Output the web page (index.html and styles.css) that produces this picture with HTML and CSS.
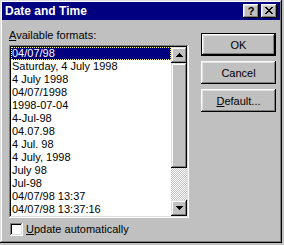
FILE: index.html
```html
<!DOCTYPE html>
<html lang="en">
<head>
    <meta charset="UTF-8">
    <title>Date and Time</title>
    <link rel="stylesheet" href="styles.css">
</head>
<body>
    <div class="window">
        <div class="title-bar">
            <span class="title">Date and Time</span>
            <div class="title-buttons">
                <button class="title-btn help">?</button>
                <button class="title-btn close">
                    <svg width="8" height="7" viewBox="0 0 8 7" shape-rendering="crispEdges">
                        <path d="M0 0h2v1h-2z M6 0h2v1h-2z M1 1h2v1h-2z M5 1h2v1h-2z M2 2h4v1h-4z M3 3h2v1h-2z M2 4h4v1h-4z M1 5h2v1h-2z M5 5h2v1h-2z M0 6h2v1h-2z M6 6h2v1h-2z" fill="#000"/>
                    </svg>
                </button>
            </div>
        </div>

        <div class="content">
            <div class="left">
                <div class="label"><u>A</u>vailable formats:</div>
                <div class="listbox">
                    <ul class="items">
                        <li class="selected">04/07/98</li>
                        <li>Saturday, 4 July 1998</li>
                        <li>4 July 1998</li>
                        <li>04/07/1998</li>
                        <li>1998-07-04</li>
                        <li>4-Jul-98</li>
                        <li>04.07.98</li>
                        <li>4 Jul. 98</li>
                        <li>4 July, 1998</li>
                        <li>July 98</li>
                        <li>Jul-98</li>
                        <li>04/07/98 13:37</li>
                        <li>04/07/98 13:37:16</li>
                    </ul>
                    <div class="scrollbar">
                        <div class="arrow">
                            <svg width="7" height="4" viewBox="0 0 7 4" shape-rendering="crispEdges">
                                <path d="M3 0h1v1h-1z M2 1h3v1h-3z M1 2h5v1h-5z M0 3h7v1h-7z" fill="#000"/>
                            </svg>
                        </div>
                        <div class="thumb"></div>
                        <div class="track"></div>
                        <div class="arrow">
                            <svg width="7" height="4" viewBox="0 0 7 4" shape-rendering="crispEdges">
                                <path d="M0 0h7v1h-7z M1 1h5v1h-5z M2 2h3v1h-3z M3 3h1v1h-1z" fill="#000"/>
                            </svg>
                        </div>
                    </div>
                </div>
                <div class="check-row">
                    <span class="checkbox"></span>
                    <span><u>U</u>pdate automatically</span>
                </div>
            </div>

            <div class="buttons">
                <button class="btn default">OK</button>
                <button class="btn">Cancel</button>
                <button class="btn"><u>D</u>efault...</button>
            </div>
        </div>
    </div>
</body>
</html>
```

FILE: styles.css
```css
body {
    margin: 0;
    background: #c0c0c0;
    font-family: "Liberation Sans", Arial, sans-serif;
    font-size: 11px;
    color: #000;
}
.window {
    width: 282px;
    height: 243px;
    box-sizing: border-box;
    padding: 2px;
    background: #c0c0c0;
    box-shadow: inset -1px -1px #000, inset 1px 1px #dfdfdf,
                inset -2px -2px #808080, inset 2px 2px #fff;
    display: flex;
    flex-direction: column;
}
.title-bar {
    height: 18px;
    background: #000080;
    color: #fff;
    display: flex;
    align-items: center;
    justify-content: space-between;
    padding: 0 3px 0 3px;
}
.title {
    font-weight: bold;
    font-size: 12px;
    line-height: 18px;
}
.title-buttons {
    display: flex;
    gap: 2px;
}
.title-btn {
    width: 16px;
    height: 14px;
    padding: 0;
    border: none;
    background: #c0c0c0;
    box-shadow: inset -1px -1px #000, inset 1px 1px #fff,
                inset -2px -2px #808080, inset 2px 2px #dfdfdf;
    font-family: "Liberation Sans", Arial, sans-serif;
    font-weight: bold;
    font-size: 11px;
    line-height: 14px;
    color: #000;
}
.close {
    display: flex;
    justify-content: center;
    align-items: flex-start;
    padding-top: 3px;
}
.close svg {
    display: block;
}
.content {
    display: flex;
    gap: 12px;
    padding: 9px 0 0 7px;
}
.left {
    width: 180px;
}
.label {
    line-height: 13px;
    margin-bottom: 3px;
}
.listbox {
    display: flex;
    padding: 2px;
    background: #fff;
    box-shadow: inset -1px -1px #fff, inset 1px 1px #808080,
                inset -2px -2px #dfdfdf, inset 2px 2px #000;
}
.items {
    list-style: none;
    margin: 0;
    padding: 0;
    flex: 1;
}
.items li {
    height: 13px;
    line-height: 13px;
    padding-left: 1px;
    white-space: nowrap;
}
.items li.selected {
    background: #000080;
    color: #fff;
    outline: 1px dotted #ffff80;
    outline-offset: -1px;
}
.scrollbar {
    width: 16px;
    display: flex;
    flex-direction: column;
}
.arrow, .thumb {
    background: #c0c0c0;
    box-shadow: inset -1px -1px #000, inset 1px 1px #dfdfdf,
                inset -2px -2px #808080, inset 2px 2px #fff;
}
.arrow {
    height: 16px;
    display: flex;
    justify-content: center;
    align-items: center;
}
.arrow svg {
    display: block;
}
.thumb {
    height: 105px;
}
.track {
    height: 32px;
    background: repeating-conic-gradient(#fff 0 25%, #c0c0c0 0 50%) 0 0 / 2px 2px;
}
.check-row {
    display: flex;
    align-items: flex-start;
    gap: 3px;
    margin: 5px 0 0 1px;
    line-height: 13px;
}
.checkbox {
    width: 13px;
    height: 13px;
    background: #fff;
    box-shadow: inset -1px -1px #fff, inset 1px 1px #808080,
                inset -2px -2px #dfdfdf, inset 2px 2px #000;
}
.buttons {
    display: flex;
    flex-direction: column;
    gap: 5px;
    margin-top: 4px;
}
.btn {
    width: 75px;
    height: 23px;
    padding: 0;
    border: none;
    background: #c0c0c0;
    box-shadow: inset -1px -1px #000, inset 1px 1px #fff,
                inset -2px -2px #808080, inset 2px 2px #dfdfdf;
    font-family: "Liberation Sans", Arial, sans-serif;
    font-size: 11px;
    color: #000;
}
.btn.default {
    box-shadow: inset -2px -2px #000, inset 1px 1px #000,
                inset 2px 2px #fff, inset -3px -3px #808080,
                inset 3px 3px #dfdfdf;
}
```
